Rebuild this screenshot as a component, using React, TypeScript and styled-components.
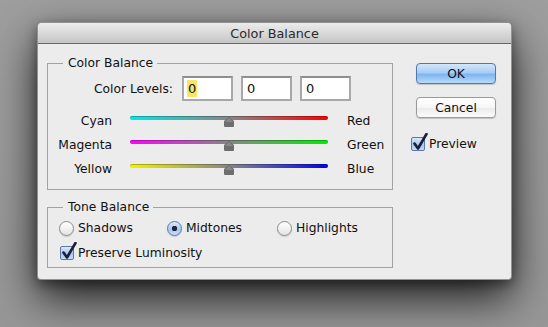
import React from 'react';
import styled, { createGlobalStyle } from 'styled-components';

const GlobalStyle = createGlobalStyle`
    html, body {
        margin: 0;
        padding: 0;
        background: #9a9a9a;
        height: 327px;
        overflow: hidden;
        font-family: 'DejaVu Sans', 'Lucida Grande', Verdana, sans-serif;
        font-size: 12.3px;
        color: #111;
    }
`;

const Desk = styled.div`
    padding: 22px 0 0 37px;
    height: 327px;
    box-sizing: border-box;
    background: linear-gradient(#9e9e9e, #979797);
`;

const Window = styled.div`
    width: 475px;
    height: 258px;
    box-sizing: border-box;
    background: #ececec;
    border: 1px solid rgba(40, 40, 40, 0.45);
    border-radius: 5px 5px 4px 4px;
    box-shadow: 0 18px 44px rgba(0, 0, 0, 0.8), 0 4px 12px rgba(0, 0, 0, 0.4);
    overflow: hidden;
`;

const TitleBar = styled.div`
    height: 21px;
    border-bottom: 1px solid #676767;
    background: linear-gradient(#ececec, #d9d9d9 50%, #c6c6c6);
    display: flex;
    align-items: center;
    justify-content: center;
    font-size: 12.8px;
    color: #2a2a2a;
    padding-top: 1px;
    box-sizing: border-box;
`;

const Body = styled.div`
    display: flex;
    padding: 12px 15px 0 9px;
`;

const LeftColumn = styled.div`
    width: 348px;
    display: flex;
    flex-direction: column;
    gap: 10px;
`;

const Group = styled.fieldset<{ $pt: number; $pb: number }>`
    margin: 0;
    padding: ${(p) => p.$pt}px 0 ${(p) => p.$pb}px 0;
    border: 1px solid #a2a2a2;
    min-width: 0;
`;

const Legend = styled.legend`
    margin-left: 15px;
    padding: 0 4px 0 5px;
    line-height: 15px;
`;

const LevelsRow = styled.div`
    display: flex;
    align-items: center;
    gap: 8px;
    margin-bottom: 6px;
`;

const LevelsLabel = styled.div`
    width: 125px;
    text-align: right;
    margin-right: 1px;
`;

const LevelBox = styled.div`
    width: 51px;
    height: 25px;
    box-sizing: border-box;
    background: #fff;
    border: 2px solid #a8a8a8;
    border-top-color: #8e8e8e;
    display: flex;
    align-items: center;
    padding-left: 3px;
    font-size: 13px;
`;

const LevelValue = styled.span<{ $selected?: boolean }>`
    background: ${(p) => (p.$selected ? '#f7e66a' : 'transparent')};
    padding: 0 1px;
    line-height: 17px;
`;

const SliderRow = styled.div`
    display: grid;
    grid-template-columns: 64px 198px auto;
    column-gap: 18px;
    height: 24px;
    align-items: center;

    & > span:last-child {
        margin-left: 1px;
    }
`;

const SideLabel = styled.span<{ $align: 'left' | 'right' }>`
    text-align: ${(p) => p.$align};
    padding-top: 3px;
`;

const Slider = styled.div`
    position: relative;
    height: 24px;
`;

const Track = styled.div<{ $from: string; $to: string }>`
    position: absolute;
    left: 0;
    right: 0;
    top: 9px;
    height: 4px;
    border-radius: 2px;
    background: linear-gradient(
        to right,
        ${(p) => p.$from},
        #868686 50%,
        ${(p) => p.$to}
    );
    box-shadow: inset 0 1px 0 rgba(0, 0, 0, 0.25);
`;

const Thumb = styled.svg`
    position: absolute;
    left: 93px;
    top: 10px;
`;

const ToneRow = styled.div`
    display: grid;
    grid-template-columns: 108px 110px auto;
    padding-left: 11px;
    height: 20px;
    align-items: center;
    margin-top: 3px;
`;

const CheckRow = styled.label<{ $indent?: number; $top?: number }>`
    display: flex;
    align-items: center;
    gap: 4px;
    height: 20px;
    padding-left: ${(p) => p.$indent ?? 0}px;
    margin-top: ${(p) => p.$top ?? 0}px;
`;

const Radio = styled.span<{ $on?: boolean }>`
    width: 15px;
    height: 15px;
    box-sizing: border-box;
    border-radius: 50%;
    border: 1px solid ${(p) => (p.$on ? '#5a78a6' : '#8c8c8c')};
    background: ${(p) =>
        p.$on
            ? 'radial-gradient(circle at 50% 50%, #1e2840 0 2.5px, transparent 3px), linear-gradient(#dfeafa, #a9c8ee 55%, #c8dcf6)'
            : 'linear-gradient(#ffffff, #f2f2f2 50%, #e2e2e2)'};
    box-shadow: 0 1px 1px rgba(0, 0, 0, 0.15);
    flex: none;
`;

const CheckBox = styled.span`
    position: relative;
    width: 14px;
    height: 14px;
    box-sizing: border-box;
    border: 1px solid #5b79a6;
    border-radius: 2px;
    background: linear-gradient(#dbe8f9, #a6c6ee 55%, #c5daf5);
    flex: none;
`;

const Tick = styled.svg`
    position: absolute;
    left: 1px;
    top: -5px;
`;

const RightColumn = styled.div`
    margin-left: 23px;
    padding-top: 7px;
    display: flex;
    flex-direction: column;
`;

const Button = styled.div<{ $primary?: boolean }>`
    width: 80px;
    height: 21px;
    box-sizing: border-box;
    border-radius: 4px;
    display: flex;
    align-items: center;
    justify-content: center;
    border: 1px solid ${(p) => (p.$primary ? '#4f78b0' : '#9a9a9a')};
    background: ${(p) =>
        p.$primary
            ? 'linear-gradient(#d3e6fb, #a9cdf6 45%, #7fb5ef 55%, #b6dafb)'
            : 'linear-gradient(#ffffff, #f6f6f6 50%, #ececec 55%, #fbfbfb)'};
    box-shadow: 0 1px 1px rgba(0, 0, 0, 0.18);
    margin-bottom: ${(p) => (p.$primary ? 13 : 16)}px;
`;

const PreviewRow = styled(CheckRow)`
    margin-left: -5px;
`;

const ThumbIcon = () => (
    <Thumb width="12" height="10" viewBox="0 0 12 10">
        <path d="M6 0 L11 4 L11 9 Q11 10 10 10 L2 10 Q1 10 1 9 L1 4 Z" fill="#6e6e6e" />
        <path d="M6 1 L10 4.5 L10 5 L2 5 L2 4.5 Z" fill="#888" />
    </Thumb>
);

const Check = () => (
    <CheckBox>
        <Tick width="15" height="18" viewBox="0 0 15 18">
            <path
                d="M1.5 10.5 L5 15.5 L13.5 1"
                fill="none"
                stroke="#1b1f3a"
                strokeWidth="2.6"
                strokeLinecap="round"
                strokeLinejoin="round"
            />
        </Tick>
    </CheckBox>
);

const sliders = [
    { left: 'Cyan', right: 'Red', from: '#00e8e8', to: '#ff0000' },
    { left: 'Magenta', right: 'Green', from: '#ff00ff', to: '#00ee00' },
    { left: 'Yellow', right: 'Blue', from: '#f2f200', to: '#0000f0' },
];

export default function App() {
    return (
        <>
            <GlobalStyle />
            <Desk>
                <Window>
                    <TitleBar>Color Balance</TitleBar>
                    <Body>
                        <LeftColumn>
                            <Group $pt={5} $pb={10}>
                                <Legend>Color Balance</Legend>
                                <LevelsRow>
                                    <LevelsLabel>Color Levels:</LevelsLabel>
                                    <LevelBox>
                                        <LevelValue $selected>0</LevelValue>
                                    </LevelBox>
                                    <LevelBox>
                                        <LevelValue>0</LevelValue>
                                    </LevelBox>
                                    <LevelBox>
                                        <LevelValue>0</LevelValue>
                                    </LevelBox>
                                </LevelsRow>
                                {sliders.map((s) => (
                                    <SliderRow key={s.left}>
                                        <SideLabel $align="right">{s.left}</SideLabel>
                                        <Slider>
                                            <Track $from={s.from} $to={s.to} />
                                            <ThumbIcon />
                                        </Slider>
                                        <SideLabel $align="left">{s.right}</SideLabel>
                                    </SliderRow>
                                ))}
                            </Group>
                            <Group $pt={0} $pb={4}>
                                <Legend>Tone Balance</Legend>
                                <ToneRow>
                                    <CheckRow>
                                        <Radio />
                                        Shadows
                                    </CheckRow>
                                    <CheckRow>
                                        <Radio $on />
                                        Midtones
                                    </CheckRow>
                                    <CheckRow>
                                        <Radio />
                                        Highlights
                                    </CheckRow>
                                </ToneRow>
                                <CheckRow $indent={12} $top={5}>
                                    <Check />
                                    Preserve Luminosity
                                </CheckRow>
                            </Group>
                        </LeftColumn>
                        <RightColumn>
                            <Button $primary>OK</Button>
                            <Button>Cancel</Button>
                            <PreviewRow>
                                <Check />
                                Preview
                            </PreviewRow>
                        </RightColumn>
                    </Body>
                </Window>
            </Desk>
        </>
    );
}
